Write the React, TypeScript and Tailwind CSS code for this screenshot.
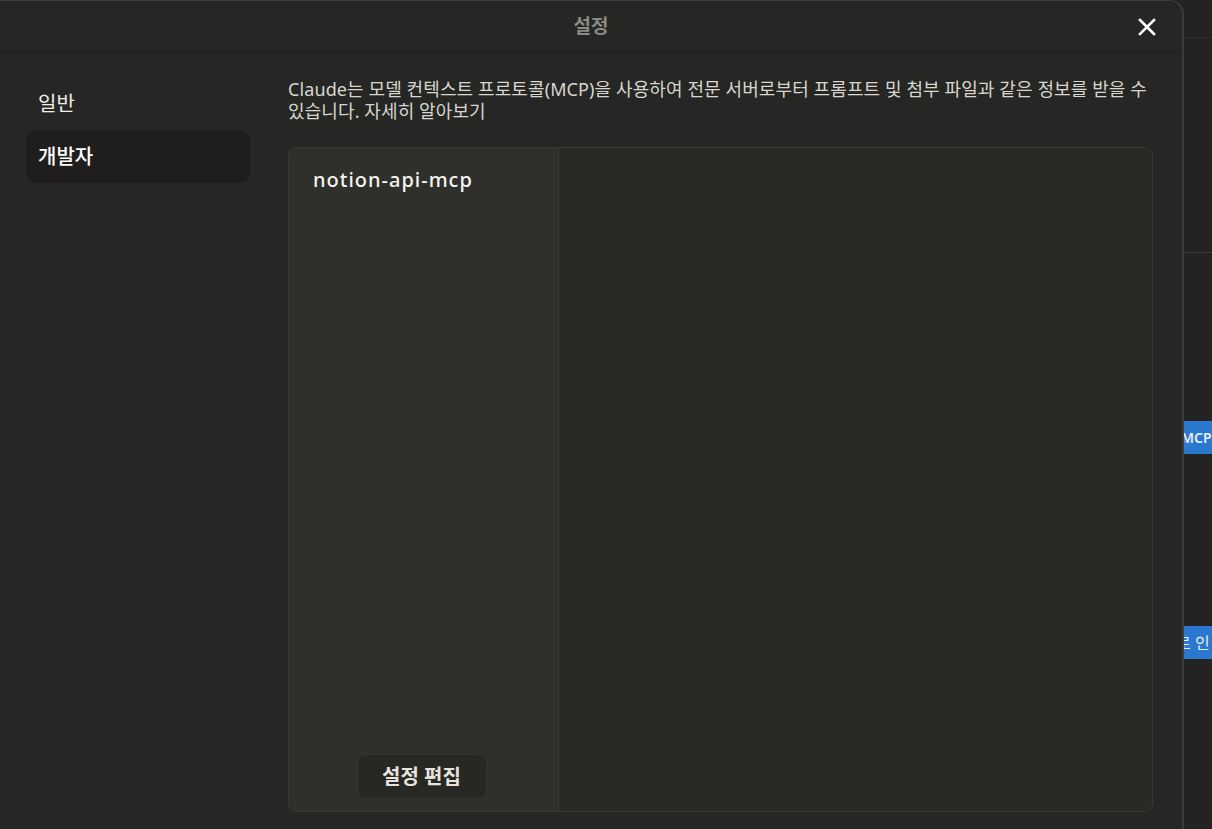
const FONT = "font-['Noto_Sans','Noto_Sans_CJK_KR',sans-serif]";

function CloseIcon() {
  return (
    <svg width="18" height="18" viewBox="0 0 18 18" fill="none">
      <path d="M2 2L16 16M16 2L2 16" stroke="#ffffff" strokeWidth="2.6" strokeLinecap="square" />
    </svg>
  );
}

function Sidebar() {
  return (
    <div className="w-[288px] shrink-0 pl-[26px] pr-[38px] pt-[24px] flex flex-col">
      <div className="h-[53px] px-[12px] flex items-center text-[20px] text-[#f1efe8]">일반</div>
      <div className="h-[53px] px-[12px] flex items-center rounded-[10px] bg-[#1f1e1c] text-[20px] font-medium text-white">
        개발자
      </div>
    </div>
  );
}

function Content() {
  return (
    <div className="flex-1 pr-[29px] pt-[25px] pb-[17px] flex flex-col">
      <p className="text-[18px] leading-[22px] tracking-[0.1px] text-[#d8d6cf]">
        Claude는 모델 컨텍스트 프로토콜(MCP)을 사용하여 전문 서버로부터 프롬프트 및 첨부 파일과 같은 정보를 받을 수
        <br />
        있습니다. 자세히 알아보기
      </p>
      <div className="mt-[25px] flex-1 flex rounded-[8px] border border-[#393834] overflow-hidden">
        <div className="w-[270px] shrink-0 bg-[#2f2f2b] border-r border-[#393834] flex flex-col">
          <div className="pl-[24px] pt-[17px] text-[20px] font-medium tracking-[1px] text-[#f5f4ef]">notion-api-mcp</div>
          <div className="flex-1" />
          <div className="flex justify-center pb-[12px] pr-[4px]">
            <button className="h-[45px] w-[130px] rounded-[8px] bg-[#272724] border border-[#34342e] text-[20px] font-bold text-[#e6e4dd]">
              설정 편집
            </button>
          </div>
        </div>
        <div className="flex-1 bg-[#2a2926]" />
      </div>
    </div>
  );
}

function BackgroundStrip() {
  return (
    <div className="flex-1 bg-[#232321] flex flex-col overflow-hidden">
      <div className="h-[38px] border-b border-[#30302e]" />
      <div className="h-[215px] border-b border-[#3a3a38]" />
      <div className="h-[168px]" />
      <div className="h-[33px] bg-[#2a78cf] flex items-center overflow-hidden">
        <span className="-ml-[3px] whitespace-nowrap text-[14px] font-semibold text-[#e8eef6]">MCP</span>
      </div>
      <div className="h-[172px]" />
      <div className="h-[33px] bg-[#2a78cf] flex items-center overflow-hidden">
        <span className="-ml-[8px] whitespace-nowrap text-[16px] text-[#e8eef6]">로 인</span>
      </div>
      <div className="flex-1" />
    </div>
  );
}

export default function App() {
  return (
    <div className={`${FONT} w-[1212px] h-[829px] flex bg-[#232321] overflow-hidden`}>
      <div className="w-[1184px] shrink-0 h-full bg-[#262624] border-r-2 border-t border-[#3a3a38] rounded-tr-[14px] flex flex-col">
        <div className="h-[52px] shrink-0 border-b border-[#1e1e1c] flex items-center relative">
          <div className="flex-1 text-center text-[19px] font-bold text-[#8b8a85]">설정</div>
          <div className="absolute right-[26px] top-[17px]">
            <CloseIcon />
          </div>
        </div>
        <div className="flex-1 flex">
          <Sidebar />
          <Content />
        </div>
      </div>
      <BackgroundStrip />
    </div>
  );
}
